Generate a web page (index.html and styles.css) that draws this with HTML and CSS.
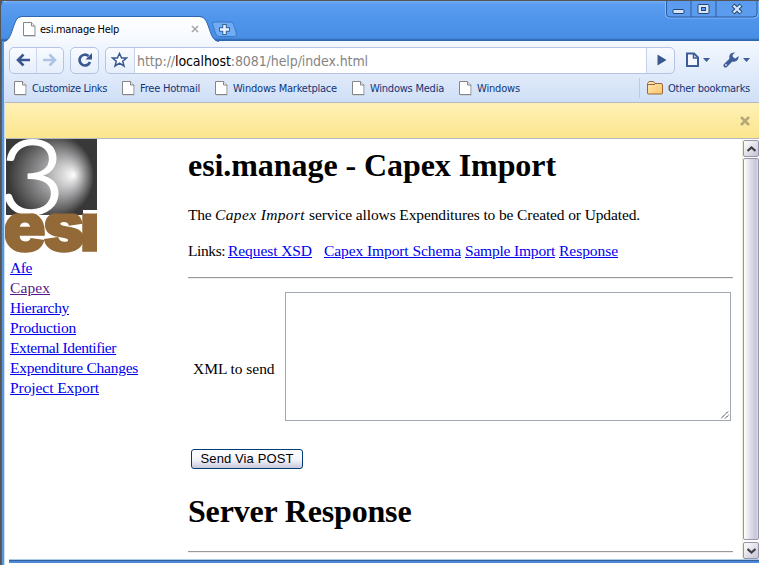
FILE: index.html
```
<!DOCTYPE html>
<html lang="en">
<head>
<meta charset="utf-8">
<title>esi.manage Help</title>
<link rel="stylesheet" href="styles.css">
</head>
<body>
<svg class="defs" width="0" height="0">
  <defs>
    <linearGradient id="gold" x1="0" y1="0" x2="1" y2="1"><stop offset="0" stop-color="#ffe9b5"/><stop offset="1" stop-color="#ffc468"/></linearGradient>
    <linearGradient id="tabfill" x1="0" y1="0" x2="0" y2="1"><stop offset="0" stop-color="#ffffff"/><stop offset="1" stop-color="#f4f8fe"/></linearGradient>
    <symbol id="page" viewBox="0 0 13 15"><path d="M.5 .5H8.500L12 4V13.500H.5Z" fill="#fff" stroke="#868686"/><path d="M8.500 .5V4H12" fill="#eee" stroke="#868686"/><path d="M1 14.500H12.500V5" fill="none" stroke="#c3cddd" stroke-width=".8"/></symbol>
  </defs>
</svg>
<div class="window">
  <header class="titlebar">
    <div class="tab">
      <svg class="tabshape" width="215" height="27" viewBox="0 0 215 27"><path d="M0 26C4 25 6 21 8 15C11 7 12 1 18 1H195C202 1 203 7 206 15C208 21 210 25 215 26V27H0Z" fill="url(#tabfill)"/><path d="M0 25.500C4 25 6 21 8 15C11 7 12 .5 18 .5H195C202 .5 203 7 206 15C208 21 210 25 215 25.500" fill="none" stroke="#2f66b0"/></svg>
      <svg class="tabicon" width="13" height="15"><use href="#page"/></svg>
      <span class="tabtitle">esi.manage Help</span>
      <svg class="tabclose" width="8" height="8" viewBox="0 0 8 8"><path d="M1 1L7 7M7 1L1 7" stroke="#aaa" stroke-width="1.700"/></svg>
    </div>
    <svg class="newtab" width="27" height="17" viewBox="0 0 27 17"><path d="M3 1H19C22 1 23 4 25 11C26 14 25 15.500 23 15.500H9C6 15.500 5 14 3.500 9L1.500 3Q1 1 3 1Z" fill="#6facf3" stroke="#3c78c6"/><path d="M13.500 3V14M8 8.500H19" stroke="#34659e" stroke-width="4.500"/><path d="M13.500 4V13M9 8.500H18" stroke="#e8f2ff" stroke-width="2.500"/></svg>
    <svg class="winbuttons" width="94" height="18" viewBox="0 0 94 18"><path d="M.5 0V13Q.5 17 4 17H89Q93 17 93 13V0" fill="#5b9cee" stroke="#87baf7"/><path d="M1.500 0V13Q1.500 16 5 16H88Q92 16 92 13V0M26 0V16M51 0V16" fill="none" stroke="#2a5c9f"/><rect x="8" y="8.500" width="11" height="4" rx="1" fill="#d5e6fc" stroke="#24466f"/><rect x="33" y="3.500" width="11" height="9" rx="1" fill="#d5e6fc" stroke="#24466f"/><rect x="36.500" y="6.500" width="4" height="3" fill="#5b9cee" stroke="#24466f"/><path d="M68 4L76 12M76 4L68 12" stroke="#24466f" stroke-width="4.300"/><path d="M68.500 4.500L75.500 11.500M75.500 4.500L68.500 11.500" stroke="#d5e6fc" stroke-width="2.400"/></svg>
  </header>
  <div class="toolbar">
    <div class="group nav">
      <svg width="15" height="14" viewBox="0 0 15 14"><path d="M14 7H3M7.500 1.500L2 7L7.500 12.500" fill="none" stroke="#39588f" stroke-width="2.600"/></svg>
      <svg width="15" height="14" viewBox="0 0 15 14"><path d="M1 7H12M7.500 1.500L13 7L7.500 12.500" fill="none" stroke="#afc3e6" stroke-width="2.600"/></svg>
    </div>
    <div class="group reload"><svg width="16" height="16" viewBox="0 0 16 16"><path d="M11.500 4A5.400 5.400 0 1 0 13 10" fill="none" stroke="#39588f" stroke-width="2.700"/><path d="M15 1V7.500H8.500Z" fill="#39588f"/></svg></div>
    <div class="omnibox">
      <div class="star"><svg width="17" height="16" viewBox="0 0 17 16"><path d="M8.500 1.500L10.600 6H15.500L11.700 9.200L13 14L8.500 11.200L4 14L5.300 9.200L1.500 6H6.400Z" fill="#fff" stroke="#39588f" stroke-width="1.500"/></svg></div>
      <div class="url">http://<b>localhost</b>:8081/help/index.html</div>
      <div class="go"><svg width="10" height="12" viewBox="0 0 10 12"><path d="M.5 .5L9.500 6L.5 11.500Z" fill="#39588f"/></svg></div>
    </div>
    <div class="tools">
      <svg width="25" height="16" viewBox="0 0 25 16"><path d="M2 1.500H9L13 5.500V14H2Z" fill="#f5f8ff" stroke="#3e5d98" stroke-width="2"/><path d="M8.500 1.500V6H13" fill="none" stroke="#3e5d98" stroke-width="1.500"/><path d="M18 6H25L21.500 10Z" fill="#3e5d98"/></svg>
      <svg width="27" height="16" viewBox="0 0 27 16"><path d="M2.500 13.500L9 7" stroke="#3e5d98" stroke-width="4" stroke-linecap="round"/><path d="M12 .5C8 0 5.500 3 6.500 6.500L9.500 9.500C13 10.500 16 7.500 15.500 4L12.500 6.500L10 5.500L9.500 3Z" fill="#3e5d98"/><circle cx="3" cy="13" r=".9" fill="#dfeafa"/><path d="M20 6H27L23.500 10Z" fill="#3e5d98"/></svg>
    </div>
  </div>
  <nav class="bookmarks">
    <span class="bm b1"><svg width="13" height="15"><use href="#page"/></svg><span>Customize Links</span></span>
    <span class="bm b2"><svg width="13" height="15"><use href="#page"/></svg><span>Free Hotmail</span></span>
    <span class="bm b3"><svg width="13" height="15"><use href="#page"/></svg><span>Windows Marketplace</span></span>
    <span class="bm b4"><svg width="13" height="15"><use href="#page"/></svg><span>Windows Media</span></span>
    <span class="bm b5"><svg width="13" height="15"><use href="#page"/></svg><span>Windows</span></span>
    <span class="other"><svg width="16" height="14" viewBox="0 0 16 14"><path d="M.5 12V2.500L2 .5H6.500L8 2.500H14Q15.500 2.500 15.500 4V12Q15.500 13 14 13H1.500Q.5 13 .5 12Z" fill="url(#gold)" stroke="#91683b"/><path d="M1 3.500H8" stroke="#91683b"/></svg><span>Other bookmarks</span></span>
  </nav>
  <div class="infobar"><svg width="10" height="10" viewBox="0 0 10 10"><path d="M1 1L9 9M9 1L1 9" stroke="#b5a878" stroke-width="2.500"/></svg></div>
  <div class="viewport">
    <aside>
      <svg class="logo" width="93" height="114" viewBox="0 0 93 114">
        <defs><radialGradient id="orb" gradientUnits="userSpaceOnUse" cx="46" cy="37" r="43" fx="69" fy="36"><stop offset="0" stop-color="#fff"/><stop offset=".12" stop-color="#e4e4e5"/><stop offset=".5" stop-color="#99999b"/><stop offset=".85" stop-color="#555"/><stop offset="1" stop-color="#383838"/></radialGradient><clipPath id="low"><rect x="0" y="74.500" width="92" height="40"/></clipPath><clipPath id="high"><rect x="1" y="0" width="91" height="76"/></clipPath></defs>
        <rect x="1" width="91" height="76" fill="url(#orb)"/>
        <text class="three" x="-6" y="74.500" textLength="66" lengthAdjust="spacingAndGlyphs" clip-path="url(#high)">3</text>
        <rect x="78" y="71" width="14" height="5" fill="#fff"/>
        <text class="esi" x="-2 38 74.5" y="112" clip-path="url(#low)">esi</text>
      </svg>
      <a class="a1">Afe</a><a class="a2">Capex</a><a class="a3">Hierarchy</a><a class="a4">Production</a><a class="a5">External Identifier</a><a class="a6">Expenditure Changes</a><a class="a7">Project Export</a>
    </aside>
    <main>
      <h1>esi.manage - Capex Import</h1>
      <p class="intro"><span class="t1">The</span><i>Capex Import</i><span class="t2">service allows Expenditures to be Created or Updated.</span></p>
      <p class="links"><span class="l0">Links:</span><a class="l1">Request XSD</a><a class="l2">Capex Import Schema</a><a class="l3">Sample Import</a><a class="l4">Response</a></p>
      <hr>
      <div class="form"><label>XML to send</label><div class="area"><svg width="8" height="8" viewBox="0 0 8 8"><path d="M0 7.500L7.500 0M4 7.500L7.500 4" stroke="#222" stroke-dasharray="1.400 .5"/></svg></div></div>
      <button>Send Via POST</button>
      <h1 class="resp">Server Response</h1>
      <hr>
    </main>
    <div class="scroll">
      <div class="sb"><svg width="9" height="6" viewBox="0 0 9 6"><path d="M.5 5L4.500 1.500L8.500 5" fill="none" stroke="#404044" stroke-width="2.300"/></svg></div>
      <div class="thumb"></div>
      <div class="sb"><svg width="9" height="6" viewBox="0 0 9 6"><path d="M.5 1L4.500 4.500L8.500 1" fill="none" stroke="#404044" stroke-width="2.300"/></svg></div>
    </div>
  </div>
  <div class="bottom"></div>
</div>
</body>
</html>
```
FILE: styles.css
```
* { box-sizing: border-box; }
body { margin: 0; background: #fff; overflow: hidden; font: 15.5px/20px "Liberation Serif", serif; color: #000; }
svg { display: block; flex: none; }
.defs { position: absolute; }
.window { width: 759px; height: 565px; border-left: 1px solid #555; border-top: 1px solid #555; background: linear-gradient(90deg, #2f66b0 0 1px, #5795df 1px 3px, #c7dcf5 3px 4px, #fff 4px); }
.titlebar { height: 40px; display: flex; align-items: flex-start; background: linear-gradient(#76aef5 0, #5b9df0 3px, #4e95eb 18px, #488ee4 37px, #2f66b0 39px); border-top-left-radius: 6px; }
.tab { position: relative; width: 215px; height: 27px; margin: 15px 0 0 3px; display: flex; align-items: center; padding-left: 19px; }
.tabshape { position: absolute; left: 0; top: 0; }
.tabicon { position: relative; margin-top: -1px; }
.tabtitle { position: relative; margin: 0 0 0 4px; width: 151px; font: 11px/14px "DejaVu Sans Condensed", "DejaVu Sans", sans-serif; letter-spacing: -.285px; white-space: nowrap; }
.tabclose { position: relative; margin-top: -1px; }
.newtab { margin: 20px 0 0 -8px; }
.winbuttons { margin: 0 0 0 auto; }
.toolbar { height: 35px; margin-left: 3px; background: linear-gradient(#f4f8fe, #dfeafa); display: flex; align-items: center; padding: 3px 7px 0 5px; }
.group, .omnibox { height: 27px; border: 1px solid #b5c3e4; border-radius: 5px; background: linear-gradient(#f9fbff, #e5eefb); display: flex; align-items: center; }
.nav { width: 55px; justify-content: space-between; padding: 0 6px; background: linear-gradient(#ccd6ec, #ccd6ec) 26px 0 / 1px 25px no-repeat, linear-gradient(#f9fbff, #e5eefb); }
.reload { width: 29px; margin-left: 6px; justify-content: center; }
.omnibox { width: 570px; margin-left: 6px; overflow: hidden; }
.star { width: 28px; padding-left: 5px; }
.url { flex: 1; height: 25px; border: solid #c4cfe8; border-width: 0 1px; background: #fff; padding-left: 2px; color: #858585; font: 14px/26px "DejaVu Sans Condensed", "DejaVu Sans", sans-serif; letter-spacing: -.088px; white-space: nowrap; }
.url b { font-weight: normal; color: #000; }
.go { width: 27px; padding-left: 10px; }
.tools { display: flex; gap: 13px; margin-left: 10px; }
.bookmarks { height: 26px; margin-left: 3px; padding: 0 9px 2px 10px; display: flex; align-items: center; background: linear-gradient(#dfeafa, #cfdff5); color: #123478; font: 11px/14px "DejaVu Sans Condensed", "DejaVu Sans", sans-serif; }
.bm, .other { display: flex; align-items: center; white-space: nowrap; }
.bm > span { margin-left: 5px; margin-top: 1px; }
.b1 { width: 108px; letter-spacing: -.368px; }
.b2 { width: 93px; letter-spacing: -.218px; }
.b3 { width: 137px; letter-spacing: -.206px; }
.b4 { width: 107px; letter-spacing: -.233px; }
.b5 { letter-spacing: -.165px; }
.other { height: 20px; margin-left: auto; padding-left: 7px; border-left: 1px solid #bccbe0; letter-spacing: -.268px; }
.other > span { margin-left: 5px; margin-top: 1px; }
.infobar { height: 37px; margin-left: 4px; border: solid #b3b8c1; border-width: 1px 0; background: linear-gradient(#fff1b6, #fbe58e); display: flex; align-items: center; justify-content: flex-end; padding-right: 9px; }
.viewport { height: 420px; margin-left: 4px; display: flex; background: #fff; }
aside { width: 183px; display: flex; flex-direction: column; align-items: flex-start; }
.logo { margin-bottom: 5px; overflow: hidden; }
.three { font: 300 103px Lato, sans-serif; fill: #fff; stroke: #fff; stroke-width: 2px; }
.esi { font: 900 71px Inter, "Liberation Sans", sans-serif; fill: #936937; stroke: #936937; stroke-width: 1.5px; }
a { color: #00e; text-decoration: underline; white-space: nowrap; }
aside a { margin-left: 5px; }
.a1 { letter-spacing: -.4px; }
.a2 { letter-spacing: .08px; color: #551a8b; }
.a3 { letter-spacing: -.33px; }
.a4 { letter-spacing: -.2px; }
.a5 { letter-spacing: -.42px; }
.a6 { letter-spacing: -.26px; }
.a7 { letter-spacing: -.07px; }
main { width: 545px; }
h1 { margin: 8px 0 0; font-size: 32px; line-height: 37px; letter-spacing: -.069px; white-space: nowrap; }
p { display: flex; margin: 0; white-space: nowrap; }
.intro { margin-top: 21px; }
.t1 { width: 27px; letter-spacing: -.2px; }
i { width: 94px; letter-spacing: .36px; }
.t2 { letter-spacing: -.12px; }
.links { margin-top: 16px; }
.l0 { width: 40px; letter-spacing: -.4px; }
.l1 { letter-spacing: -.08px; margin-right: 12px; }
.l2 { letter-spacing: -.085px; margin-right: 4px; }
.l3 { letter-spacing: -.19px; margin-right: 4px; }
.l4 { letter-spacing: -.05px; }
hr { margin: 16px 0 0; height: 2px; border: 0; border-top: 1px solid #999; background: #eee; }
.form { display: flex; align-items: center; margin-top: 13px; height: 129px; }
label { width: 97px; padding: 25px 0 0 5px; letter-spacing: -.05px; white-space: nowrap; }
.area { width: 446px; height: 129px; border: 1px solid #a2a9b3; display: flex; align-items: flex-end; justify-content: flex-end; padding: 1px; }
button { display: block; margin: 28px 0 0 3px; width: 112px; height: 20px; padding: 0; border: 1px solid #003c74; border-radius: 3px; background: linear-gradient(#fff, #f4f3fa 55%, #c9c8dc); font: 13px/18px "Liberation Sans", sans-serif; letter-spacing: .11px; color: #000; }
.resp { margin-top: 24px; letter-spacing: -.175px; }
.resp + hr { margin-top: 21px; }
.scroll { width: 17px; margin-left: 9px; height: 420px; padding: 1px 1px 0; display: flex; flex-direction: column; align-items: center; border-left: 1px solid #eeedda; }
.sb { width: 16px; height: 17px; flex: none; border: 1px solid #9595a7; border-radius: 2px; background: linear-gradient(135deg, #fff, #c5c4d5); display: flex; align-items: center; justify-content: center; }
.thumb { width: 16px; flex: 1; margin: 1px 0 2px; border: 1px solid #9595a7; border-radius: 2px; background: linear-gradient(90deg, #fff, #e8e8f0 30%, #c5c5d8 85%, #dedeea); }
.bottom { height: 4px; margin-left: 8px; border-top: 1px solid #aecbea; background: linear-gradient(#365f9e 0 1px, #4a89d5 1px); }
```
